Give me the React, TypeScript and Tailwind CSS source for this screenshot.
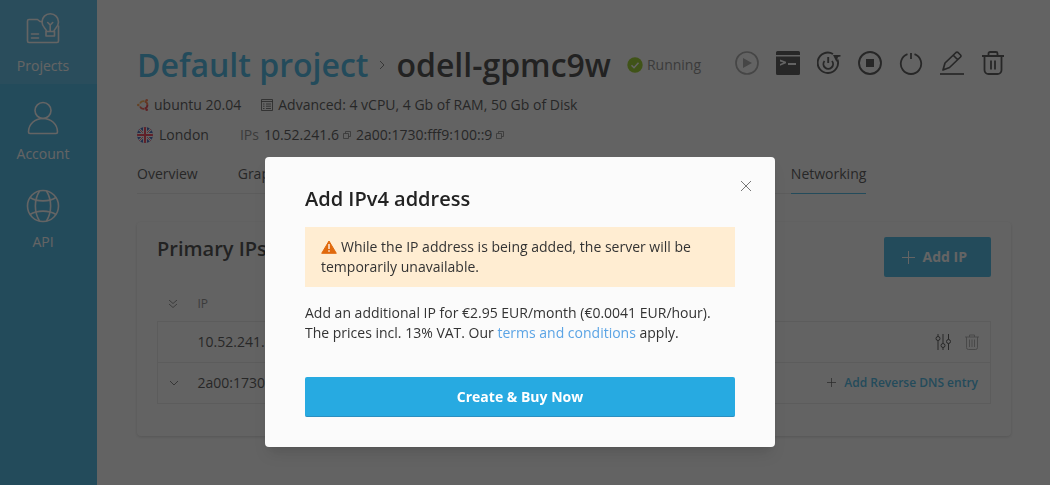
import React from "react";

interface IconProps {
  className?: string;
}

const ProjectsIcon: React.FC<IconProps> = ({ className }) => (
  <svg className={className} viewBox="0 0 36 36" fill="none" stroke="currentColor" strokeWidth="1.6" strokeLinejoin="round" strokeLinecap="round">
    <path d="M17 9.500h-2l-2.500-2H4a1.500 1.500 0 0 0-1.500 1.500V29A1.500 1.500 0 0 0 4 30.500h28a1.500 1.500 0 0 0 1.500-1.500V14" />
    <path d="M6.500 22h7M6.500 26h7" />
    <path d="M21.500 19.500c0-3-4.500-4-4.500-9.500a8.200 8.200 0 0 1 16.500 0c0 5.500-4.500 6.500-4.500 9.500" />
    <path d="M21 19.500h8.500v4.500H21zM25.200 19v-6M22.700 10.500l2.500 2.500 2.500-2.500" />
  </svg>
);

const AccountIcon: React.FC<IconProps> = ({ className }) => (
  <svg className={className} viewBox="0 0 36 36" fill="none" stroke="currentColor" strokeWidth="1.6" strokeLinejoin="round">
    <circle cx="18" cy="10.500" r="8" />
    <path d="M5 33.500a1.500 1.500 0 0 1-1.500-1.500C3.500 24 10 18.500 18 18.500s14.500 5.500 14.500 13.500a1.500 1.500 0 0 1-1.500 1.500z" />
  </svg>
);

const GlobeIcon: React.FC<IconProps> = ({ className }) => (
  <svg className={className} viewBox="0 0 36 36" fill="none" stroke="currentColor" strokeWidth="1.6">
    <circle cx="18" cy="18" r="15.500" />
    <path d="M14.500 3C9 12 9 24 14.500 33M21.500 3c5.500 9 5.500 21 0 30" />
    <path d="M5 9.500c7 4.500 19 4.500 26 0M5 26.500c7-4.500 19-4.500 26 0" />
  </svg>
);

const PlayIcon: React.FC = () => (
  <svg className="size-6" viewBox="0 0 24 24" fill="none" stroke="currentColor" strokeWidth="1.7">
    <circle cx="12" cy="12" r="11" />
    <path d="M8 7l9 5-9 5z" fill="currentColor" stroke="none" />
  </svg>
);

const ConsoleIcon: React.FC = () => (
  <svg className="size-6" viewBox="0 0 24 24" fill="currentColor">
    <path d="M1.500 0h21A1.500 1.500 0 0 1 24 1.500V4H0V1.500A1.500 1.500 0 0 1 1.500 0zM0 5.500h24v17a1.500 1.500 0 0 1-1.500 1.500h-21A1.500 1.500 0 0 1 0 22.500zM4 8.500v2l3.500 1L4 13v1.800l6-2.500v-1.500zM12 12v2h8v-2z" fillRule="evenodd" />
  </svg>
);

const RestartIcon: React.FC = () => (
  <svg className="size-6" viewBox="0 0 24 24" fill="none" stroke="currentColor" strokeWidth="1.9">
    <path d="M16 3A10.200 10.200 0 1 0 20.500 8.500" />
    <path d="M7.500 10a4.800 4.800 0 1 0 7.500 0M11.200 6v6" />
    <path d="M16 4h7.500v1.500l-2.500.500-1.500 5z" fill="currentColor" stroke="none" />
  </svg>
);

const StopIcon: React.FC = () => (
  <svg className="size-6" viewBox="0 0 24 24" fill="none" stroke="currentColor" strokeWidth="1.9">
    <circle cx="12" cy="12" r="11" />
    <path d="M8 8h8v8H8z" fill="currentColor" stroke="none" />
  </svg>
);

const PowerIcon: React.FC = () => (
  <svg className="size-6" viewBox="0 0 24 24" fill="none" stroke="currentColor" strokeWidth="1.8">
    <path d="M8.500 3.200a10.200 10.200 0 1 0 7 0M12 2v6" />
  </svg>
);

const EditIcon: React.FC = () => (
  <svg className="size-6" viewBox="0 0 24 24" fill="none" stroke="currentColor" strokeWidth="1.7" strokeLinejoin="round">
    <path d="M3 19l2-7L16 1.500a1.500 1.500 0 0 1 2 0l2.500 2.500a1.500 1.500 0 0 1 0 2L9.500 16.500zM13.500 4.500l4 4" />
    <path d="M0 23h24" />
  </svg>
);

const TrashIcon: React.FC = () => (
  <svg className="size-6" viewBox="0 0 24 24" fill="none" stroke="currentColor" strokeWidth="1.8">
    <path d="M1 5h22M7.500 5V2.500A1.500 1.500 0 0 1 9 1h6a1.500 1.500 0 0 1 1.500 1.500V5M3.500 5v14a4 4 0 0 0 4 4h9a4 4 0 0 0 4-4V5M10 9.500v9M14 9.500v9" />
  </svg>
);

const ThinTrashIcon: React.FC = () => (
  <svg className="h-4 w-3.5" viewBox="0 0 14 16" fill="none" stroke="currentColor" strokeWidth="0.9">
    <path d="M0 3h14M4.500 3V1h5v2M1.500 3v10.500a2 2 0 0 0 2 2h7a2 2 0 0 0 2-2V3M4.500 5.500v7.500M7 5.500v7.500M9.500 5.500v7.500" />
  </svg>
);

const SlidersIcon: React.FC = () => (
  <svg className="size-4" viewBox="0 0 16 16" fill="none" stroke="currentColor">
    <path d="M3 0v2.500M3 6.500V16M8 0v9M8 13.500V16M13.500 0v5.500M13.500 9.500V16" />
    <circle cx="3" cy="4.500" r="2" />
    <circle cx="8" cy="11.500" r="2" />
    <circle cx="13.500" cy="7.500" r="2" />
  </svg>
);

const PlusIcon: React.FC<IconProps> = ({ className }) => (
  <svg className={className} viewBox="0 0 13 13" fill="none" stroke="currentColor">
    <path d="M6.500 0v13M0 6.500h13" />
  </svg>
);

const CopyIcon: React.FC = () => (
  <svg className="size-2 text-[#666]" viewBox="0 0 8 8" fill="none" stroke="currentColor" strokeWidth="0.8">
    <path d="M.5 2.500h5v5h-5zM2.500 2.500v-2h5v5h-2" />
  </svg>
);

const UbuntuIcon: React.FC = () => (
  <svg className="size-3" viewBox="0 0 12 12" fill="none" strokeWidth="1.9">
    <path d="M3 4.500A3.800 3.800 0 0 1 7.500 2.300" stroke="#ffa030" />
    <path d="M7.800 2.400A3.800 3.800 0 0 1 10.400 6" stroke="#ff6a2a" />
    <path d="M10.400 6A3.800 3.800 0 0 1 7.800 9.600" stroke="#e8202a" />
    <path d="M3 7.500A3.800 3.800 0 0 0 7.500 9.700" stroke="#f0402a" />
    <circle cx="1.300" cy="6" r="1.300" fill="#ff9030" />
    <circle cx="9.700" cy="1.300" r="1.300" fill="#ff602a" />
    <circle cx="9.700" cy="10.700" r="1.300" fill="#e8202a" />
  </svg>
);

const PlanIcon: React.FC = () => (
  <svg className="size-3" viewBox="0 0 12 12" fill="none" stroke="currentColor" strokeWidth="0.8">
    <path d="M.5.500h11v11H.5zM.5 2.500h11M2 5h1.500M5 5h5M2 7.200h1.500M5 7.200h5M2 9.500h1.500M5 9.500h5" />
  </svg>
);

const FlagIcon: React.FC = () => (
  <svg className="size-4 rounded-full" viewBox="0 0 16 16">
    <path d="M0 0h16v16H0z" fill="#1e4ab0" />
    <path d="M0 0l16 16M16 0L0 16" stroke="#fff" strokeWidth="2.400" />
    <path d="M0 0l16 16M16 0L0 16" stroke="#e0243a" strokeWidth="0.8" />
    <path d="M8 0v16M0 8h16" stroke="#fff" strokeWidth="4" />
    <path d="M8 0v16M0 8h16" stroke="#f0203a" strokeWidth="2" />
  </svg>
);

const RunningIcon: React.FC = () => (
  <svg className="size-4" viewBox="0 0 16 16" fill="none">
    <circle cx="8" cy="8" r="7.700" fill="#87c600" />
    <path d="M4.500 8.200l2.500 2.500 4.500-5" stroke="#fff" strokeWidth="1.500" />
  </svg>
);

const WarningIcon: React.FC = () => (
  <svg className="mr-1 inline-block h-3.5 w-4 align-[-2px]" viewBox="0 0 16 14">
    <path d="M8 1L15.300 13.300H.700z" fill="#e06a0e" stroke="#e06a0e" strokeLinejoin="round" />
    <path d="M8 4v5M8 10.300v1.500" stroke="#fff" strokeWidth="1.300" />
  </svg>
);

const sideLinks = [
  { label: "Projects", Icon: ProjectsIcon, active: true },
  { label: "Account", Icon: AccountIcon, active: false },
  { label: "API", Icon: GlobeIcon, active: false },
];

const actions = [
  { label: "Start", Icon: PlayIcon, disabled: true },
  { label: "Console", Icon: ConsoleIcon },
  { label: "Restart", Icon: RestartIcon },
  { label: "Stop", Icon: StopIcon },
  { label: "Power", Icon: PowerIcon },
  { label: "Rename", Icon: EditIcon },
  { label: "Delete", Icon: TrashIcon },
];

const Sidebar: React.FC = () => (
  <nav className="w-[97px] shrink-0 bg-[#27aae1] text-white">
    {sideLinks.map(({ label, Icon, active }) => (
      <a
        key={label}
        href="#"
        className={`flex h-[88px] flex-col items-center gap-2 pr-[11px] pt-4 text-sm leading-5 first:h-[84px] first:pt-3 ${active ? "bg-[#3fb3e4]" : ""}`}
      >
        <Icon className="size-9" />
        {label}
      </a>
    ))}
  </nav>
);

const ServerHeader: React.FC = () => (
  <header className="text-sm leading-5 text-[#333]">
    <div className="flex items-center">
      <h1 className="flex items-center text-[32px] font-semibold leading-10 text-[#222]">
        <a href="#" className="text-[#27aae1]">Default project</a>
        <svg className="mx-2.5 h-2 w-2" viewBox="0 0 8 8" fill="none" stroke="#666">
          <path d="M2 0l4 4-4 4" />
        </svg>
        odell-gpmc9w
      </h1>
      <span className="ml-4 flex items-center gap-1 text-[#777]">
        <RunningIcon />
        Running
      </span>
      <div className="mb-1 ml-auto mr-1.5 flex gap-[17px] text-[#333]">
        {actions.map(({ label, Icon, disabled }) => (
          <button key={label} type="button" aria-label={label} disabled={disabled} className="disabled:text-[#999]">
            <Icon />
          </button>
        ))}
      </div>
    </div>
    <div className="mt-2.5 flex items-center">
      <UbuntuIcon />
      <span className="ml-[5px] mr-5">ubuntu 20.04</span>
      <PlanIcon />
      <span className="ml-[5px]">Advanced: 4 vCPU, 4 Gb of RAM, 50 Gb of Disk</span>
    </div>
    <div className="mt-2.5 flex items-center">
      <FlagIcon />
      <span className="ml-1.5 mr-[31px]">London</span>
      <span className="mr-[5px] text-[#777]">IPs</span>
      <span className="mr-1">10.52.241.6</span>
      <CopyIcon />
      <span className="ml-[5px] mr-1">2a00:1730:fff9:100::9</span>
      <CopyIcon />
    </div>
  </header>
);

const Tabs: React.FC = () => (
  <nav className="mt-[19px] flex w-5/6 gap-10 border-b border-[#e4e4e4] text-sm leading-5 text-[#333]">
    <a href="#" className="pb-[9px]">Overview</a>
    <a href="#" className="pb-[9px]">Graphs</a>
    <a href="#" className="-mb-px -mr-px ml-auto border-b border-[#27aae1] pb-[9px]">Networking</a>
  </nav>
);

const PrimaryIps: React.FC = () => (
  <section className="mt-7 rounded-sm px-5 pb-8 pt-[15px] shadow-[0_1px_3px_rgba(0,0,0,0.18)]">
    <div className="flex items-start justify-between">
      <h2 className="-mt-0.5 text-xl font-semibold leading-7 text-[#222]">Primary IPs</h2>
      <button type="button" className="flex h-10 items-center gap-2 rounded-xs bg-[#27aae1] pl-[18px] pr-6 text-sm font-bold text-white">
        <PlusIcon className="size-[13px]" />
        Add IP
      </button>
    </div>
    <table className="mt-4 w-full text-sm leading-5 text-[#333]">
      <thead>
        <tr className="h-7 text-xs text-[#777]">
          <th className="w-10 pb-1.5 pl-2.5">
            <svg className="h-2 w-2.5" viewBox="0 0 10 8" fill="none" stroke="currentColor">
              <path d="M1 0l4 3.500L9 0M1 4l4 3.500L9 4" />
            </svg>
          </th>
          <th className="pb-1.5 text-left font-normal">IP</th>
          <th />
        </tr>
      </thead>
      <tbody className="border border-[#e4e4e4]">
        <tr className="h-[41px] border-b border-[#e4e4e4]">
          <td />
          <td>10.52.241.6</td>
          <td className="pr-[11px]">
            <div className="flex items-center justify-end gap-3.5">
              <button type="button" aria-label="Configure"><SlidersIcon /></button>
              <button type="button" aria-label="Delete IP" className="text-[#999]"><ThinTrashIcon /></button>
            </div>
          </td>
        </tr>
        <tr className="h-[41px]">
          <td className="pl-3">
            <svg className="h-1.5 w-2" viewBox="0 0 8 6" fill="none" stroke="#666">
              <path d="M0 1l4 4 4-4" />
            </svg>
          </td>
          <td>2a00:1730:fff9:100::9</td>
          <td className="pr-3">
            <button type="button" className="ml-auto flex items-center gap-2 text-xs font-semibold text-[#27aae1]">
              <PlusIcon className="size-[9px] text-[#333]" />
              Add Reverse DNS entry
            </button>
          </td>
        </tr>
      </tbody>
    </table>
  </section>
);

const AddIpDialog: React.FC = () => (
  <div className="fixed inset-0 flex items-start justify-center bg-[#222]/70 pr-2.5 pt-[157px]">
    <div role="dialog" aria-labelledby="dialog-title" className="w-full max-w-[510px] rounded bg-[#fbfbfb] px-10 pb-[30px] pt-7 shadow-lg">
      <div className="flex items-start justify-between">
        <h2 id="dialog-title" className="text-xl font-semibold leading-7 text-[#222]">Add IPv4 address</h2>
        <button type="button" aria-label="Close" className="-mr-4 -mt-1 text-[#777]">
          <svg className="size-2.5" viewBox="0 0 10 10" fill="none" stroke="currentColor">
            <path d="M0 0l10 10M10 0L0 10" />
          </svg>
        </button>
      </div>
      <p className="mt-3.5 bg-[#ffedd2] px-4 py-2.5 text-sm leading-5 text-[#333]">
        <WarningIcon />
        While the IP address is being added, the server will be temporarily unavailable.
      </p>
      <p className="mt-4 text-sm leading-5 text-[#333]">
        Add an additional IP for €2.95 EUR/month (€0.0041 EUR/hour).
        <br />
        The prices incl. 13% VAT. Our{" "}
        <a href="#" className="text-[#5ba4e5]">terms and conditions</a> apply.
      </p>
      <button type="button" className="mt-[34px] h-10 w-full rounded-xs border-b border-[#2b8fc0] bg-[#27aae1] text-sm font-bold text-white">
        Create &amp; Buy Now
      </button>
    </div>
  </div>
);

const App: React.FC = () => {
  return (
    <div className="flex min-h-screen bg-[#fbfbfb] font-['Open_Sans','Noto_Sans',sans-serif]">
      <Sidebar />
      <main className="min-w-0 flex-1 pb-12 pl-10 pr-[39px] pt-[45px]">
        <ServerHeader />
        <Tabs />
        <PrimaryIps />
      </main>
      <AddIpDialog />
    </div>
  );
};

export default App;
